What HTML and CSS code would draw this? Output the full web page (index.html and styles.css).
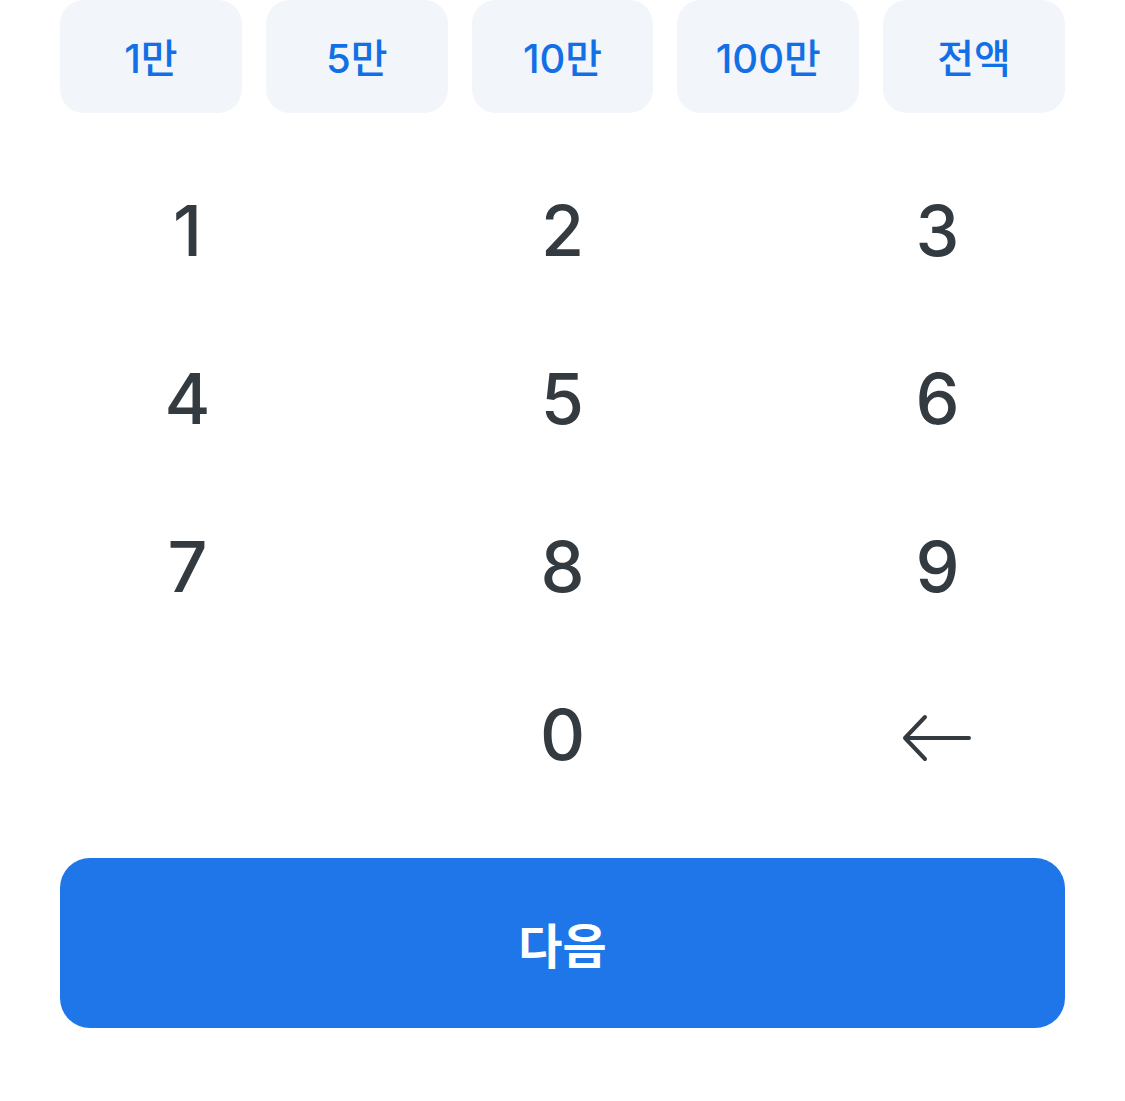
FILE: index.html
```html
<!DOCTYPE html>
<html lang="ko">
<head>
<meta charset="utf-8">
<link rel="stylesheet" href="styles.css">
</head>
<body>
<div class="page">
  <div class="chips">
    <button class="chip">1만</button>
    <button class="chip">5만</button>
    <button class="chip">10만</button>
    <button class="chip">100만</button>
    <button class="chip">전액</button>
  </div>
  <div class="keypad">
    <div class="key">1</div>
    <div class="key">2</div>
    <div class="key">3</div>
    <div class="key">4</div>
    <div class="key">5</div>
    <div class="key">6</div>
    <div class="key">7</div>
    <div class="key">8</div>
    <div class="key">9</div>
    <div class="key"></div>
    <div class="key">0</div>
    <div class="key">
      <svg class="back" width="70" height="50" viewBox="0 0 70 50">
        <path d="M68 24 H4 M24 3 L4 24 L24 45" fill="none" stroke="#333a40" stroke-width="4" stroke-linecap="round" stroke-linejoin="round"/>
      </svg>
    </div>
  </div>
  <div class="footer">
    <button class="next">다음</button>
  </div>
</div>
</body>
</html>
```
FILE: styles.css
```css
html, body {
  margin: 0;
  padding: 0;
  background: #ffffff;
}
.page {
  width: 1125px;
  font-family: Inter, "Noto Sans CJK KR", sans-serif;
}
.chips {
  display: grid;
  grid-template-columns: repeat(5, 1fr);
  gap: 24px;
  padding: 0 60px;
}
.chip {
  height: 113px;
  border: none;
  border-radius: 24px;
  background: #f2f5fa;
  color: #1270e6;
  font-family: Inter, "Noto Sans CJK KR", sans-serif;
  font-size: 40px;
  font-weight: 500;
  padding: 0 0 2px;
}
.keypad {
  margin-top: 33px;
  display: grid;
  grid-template-columns: repeat(3, 375px);
  grid-auto-rows: 168px;
}
.key {
  display: flex;
  align-items: center;
  justify-content: center;
  font-size: 70px;
  font-weight: 500;
  color: #333a40;
}
.back {
  display: block;
  margin: 10px 4px 0 0;
}
.footer {
  padding: 40px 60px 0;
}
.next {
  display: block;
  width: 100%;
  height: 170px;
  border: none;
  border-radius: 30px;
  background: #1e76e8;
  color: #ffffff;
  font-family: "Noto Sans CJK KR", sans-serif;
  font-size: 48px;
  font-weight: 700;
  padding: 0;
}
```
